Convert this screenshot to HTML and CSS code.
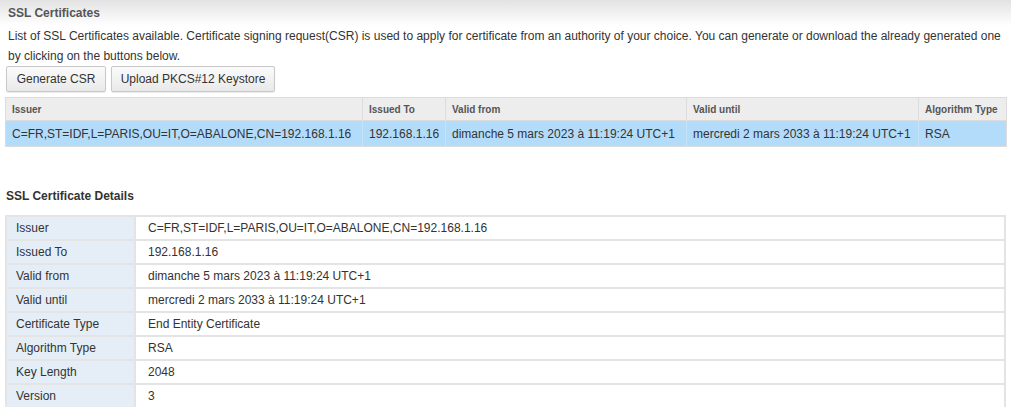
FILE: index.html
```html
<!DOCTYPE html>
<html>
<head>
<meta charset="utf-8">
<link rel="stylesheet" href="styles.css">
</head>
<body>
<div class="title-bar">SSL Certificates</div>
<p class="desc">List of SSL Certificates available. Certificate signing request(CSR) is used to apply for certificate from an authority of your choice. You can generate or download the already generated one by clicking on the buttons below.</p>
<div class="buttons">
  <button class="btn btn-csr">Generate CSR</button>
  <button class="btn btn-upload">Upload PKCS#12 Keystore</button>
</div>
<table class="cert-list">
  <colgroup>
    <col class="c1"><col class="c2"><col class="c3"><col class="c4"><col class="c5">
  </colgroup>
  <thead>
    <tr>
      <th>Issuer</th><th>Issued To</th><th>Valid from</th><th>Valid until</th><th>Algorithm Type</th>
    </tr>
  </thead>
  <tbody>
    <tr class="selected">
      <td>C=FR,ST=IDF,L=PARIS,OU=IT,O=ABALONE,CN=192.168.1.16</td>
      <td>192.168.1.16</td>
      <td>dimanche 5 mars 2023 à 11:19:24 UTC+1</td>
      <td>mercredi 2 mars 2033 à 11:19:24 UTC+1</td>
      <td>RSA</td>
    </tr>
  </tbody>
</table>
<h3 class="section-title">SSL Certificate Details</h3>
<table class="details">
  <tr><th>Issuer</th><td>C=FR,ST=IDF,L=PARIS,OU=IT,O=ABALONE,CN=192.168.1.16</td></tr>
  <tr><th>Issued To</th><td>192.168.1.16</td></tr>
  <tr><th>Valid from</th><td>dimanche 5 mars 2023 à 11:19:24 UTC+1</td></tr>
  <tr><th>Valid until</th><td>mercredi 2 mars 2033 à 11:19:24 UTC+1</td></tr>
  <tr><th>Certificate Type</th><td>End Entity Certificate</td></tr>
  <tr><th>Algorithm Type</th><td>RSA</td></tr>
  <tr><th>Key Length</th><td>2048</td></tr>
  <tr><th>Version</th><td>3</td></tr>
</table>
</body>
</html>
```
FILE: styles.css
```css
html, body {
  margin: 0;
  padding: 0;
  background: #fff;
  font-family: "Liberation Sans", Arial, sans-serif;
  font-size: 12px;
  color: #333;
}
.title-bar {
  height: 26px;
  line-height: 26px;
  padding-left: 8px;
  font-weight: bold;
  font-size: 12px;
  color: #555;
  background: linear-gradient(to bottom, #e2e2e2 0%, #f4f4f4 60%, #ffffff 100%);
}
.desc {
  margin: 0;
  padding: 0 8px;
  line-height: 20px;
  font-size: 12px;
  color: #333;
}
.buttons {
  display: flex;
  gap: 5px;
  padding-left: 6px;
  height: 26px;
}
.btn {
  box-sizing: border-box;
  height: 26px;
  padding: 0;
  white-space: nowrap;
  font-family: "Liberation Sans", Arial, sans-serif;
  font-size: 12px;
  color: #333;
  border: 1px solid #c8c8c8;
  border-radius: 2px;
  background: linear-gradient(to bottom, #fbfbfb, #e9e9e9);
  box-shadow: 0 1px 1px rgba(0,0,0,0.08);
}
.btn-csr { width: 100px; }
.btn-upload { width: 164px; }
.cert-list {
  margin: 5px 0 0 5px;
  width: 1001px;
  table-layout: fixed;
  border-collapse: collapse;
}
.c1 { width: 357px; }
.c2 { width: 83px; }
.c3 { width: 241px; }
.c4 { width: 232px; }
.c5 { width: 88px; }
.cert-list th {
  height: 22px;
  padding: 0 6px;
  text-align: left;
  font-size: 10px;
  font-weight: bold;
  color: #555;
  background: #ededed;
  border: 1px solid #dcdcdc;
  white-space: nowrap;
}
.cert-list td {
  height: 25px;
  padding: 0 6px;
  font-size: 12px;
  color: #333;
  white-space: nowrap;
  border-left: 1px solid #c6e3f7;
  border-bottom: 1px solid #dcdcdc;
}
.cert-list tr.selected td {
  background: #b3dcfb;
}
.cert-list td:first-child { border-left: 1px solid #dcdcdc; }
.cert-list td:last-child { border-right: 1px solid #dcdcdc; }
.section-title {
  margin: 0;
  padding: 40px 0 0 6px;
  height: 19px;
  line-height: 19px;
  font-size: 12px;
  font-weight: bold;
  color: #333;
}
.details {
  margin: 9px 0 0 5px;
  width: 1001px;
  border-collapse: collapse;
}
.details th, .details td {
  height: 22px;
  border: 2px solid #e4e4e4;
  text-align: left;
  font-weight: normal;
  font-size: 12px;
  color: #333;
}
.details th {
  width: 108px;
  padding: 0 10px 0 9px;
  background: #e5eef6;
}
.details td {
  padding: 0 10px 0 12px;
  background: #fff;
}
```
